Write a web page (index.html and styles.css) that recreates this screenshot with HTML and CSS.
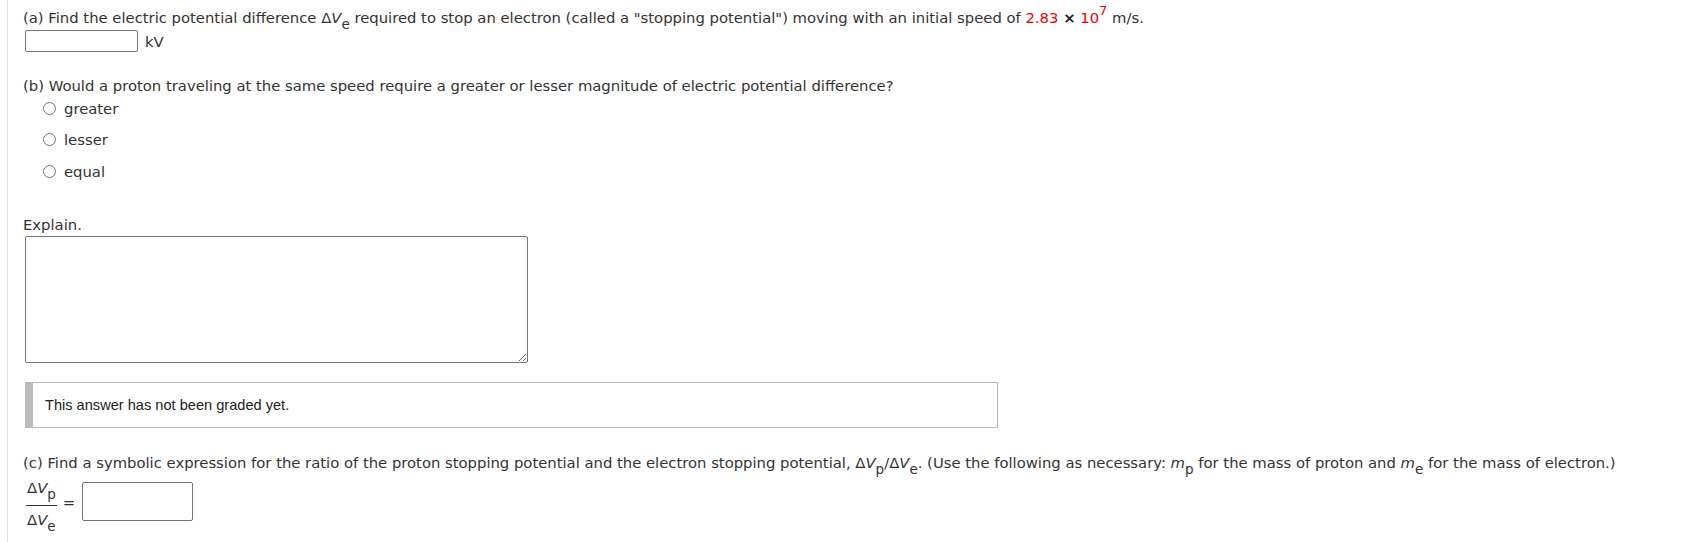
FILE: index.html
```html
<!DOCTYPE html>
<html>
<head>
<meta charset="utf-8">
<link rel="stylesheet" href="styles.css">
</head>
<body>
<div class="page">
  <p class="q q-a">(a) Find the electric potential difference <span class="var">&Delta;<i>V</i><sub>e</sub></span> required to stop an electron (called a "stopping potential") moving with an initial speed of <span class="red">2.83</span> <b class="times">&times;</b> <span class="red">10<sup>7</sup></span> m/s.</p>
  <div class="answer-row">
    <input class="ans ans-a" type="text">
    <span class="unit">kV</span>
  </div>

  <p class="q q-b">(b) Would a proton traveling at the same speed require a greater or lesser magnitude of electric potential difference?</p>
  <div class="choices">
    <label class="choice"><input type="radio" name="b"><span>greater</span></label>
    <label class="choice"><input type="radio" name="b"><span>lesser</span></label>
    <label class="choice"><input type="radio" name="b"><span>equal</span></label>
  </div>

  <p class="q explain">Explain.</p>
  <textarea class="explain-box"></textarea>

  <div class="graded">This answer has not been graded yet.</div>

  <p class="q q-c">(c) Find a symbolic expression for the ratio of the proton stopping potential and the electron stopping potential, <span class="var">&Delta;<i>V</i><sub>p</sub>/&Delta;<i>V</i><sub>e</sub></span>. (Use the following as necessary: <i>m</i><sub>p</sub> for the mass of proton and <i>m</i><sub>e</sub> for the mass of electron.)</p>
  <div class="frac-row">
    <span class="frac">
      <span class="num">&Delta;<i>V</i><sub>p</sub></span>
      <span class="den">&Delta;<i>V</i><sub>e</sub></span>
    </span>
    <span class="eq">=</span>
    <input class="ans ans-c" type="text">
  </div>
</div>
</body>
</html>
```

FILE: styles.css
```css
html, body {
  margin: 0;
  padding: 0;
  background: #fff;
}
body {
  font-family: "DejaVu Sans", Verdana, sans-serif;
  font-size: 14.8px;
  color: #333;
  height: 542px;
  overflow: hidden;
}
.page {
  margin-left: 7px;
  border-left: 1px solid #ddd;
  padding-left: 15px;
  min-height: 542px;
  box-sizing: border-box;
  padding-top: 9px;
}
p { margin: 0; }
.q { line-height: 18px; }
sub {
  font-size: 13.5px;
  vertical-align: -6px;
  line-height: 0;
}
sup {
  font-size: 13px;
  vertical-align: 8px;
  line-height: 0;
}
.red { color: #e00; }
.times { color: #222; }
.answer-row {
  display: flex;
  align-items: center;
  margin-top: 3px;
  height: 22px;
}
.ans {
  box-sizing: border-box;
  border: 1px solid #767676;
  border-radius: 2px;
  padding: 0;
  margin: 0;
  background: #fff;
  font-family: inherit;
}
.ans-a {
  width: 113px;
  height: 22px;
  margin-left: 2px;
}
.unit { margin-left: 7px; }
.q-b { margin-top: 25px; }
.choices {
  display: flex;
  flex-direction: column;
  gap: 11.5px;
  padding-left: 20px;
  margin-top: 3px;
}
.choice {
  display: flex;
  align-items: center;
  height: 20px;
}
.choice input {
  margin: 0 8px 0 0;
  width: 13px;
  height: 13px;
}
.explain { margin-top: 35px; }
.explain-box {
  display: block;
  width: 503px;
  height: 127px;
  box-sizing: border-box;
  margin: 2px 0 0 2px;
  border: 1px solid #767676;
  border-radius: 2px;
}
.graded {
  width: 973px;
  height: 46px;
  box-sizing: border-box;
  margin: 19px 0 0 2px;
  border: 1px solid #bbb;
  border-left: 8px solid #bbb;
  padding-left: 12px;
  display: flex;
  align-items: center;
  font-family: "Liberation Sans", Arial, sans-serif;
  font-size: 14.6px;
  color: #222;
}
.q-c { margin-top: 26px; }
.frac-row {
  display: flex;
  align-items: flex-start;
  margin-top: 7px;
}
.frac {
  display: inline-flex;
  flex-direction: column;
  align-items: stretch;
  padding-left: 3px;
}
.frac .num {
  border-bottom: 1px solid #333;
  padding: 0 1px 8px 1px;
  line-height: 18px;
}
.frac .den {
  padding: 5px 1px 0 1px;
  line-height: 18px;
}
.eq {
  margin: 15px 7px 0 6px;
  line-height: 18px;
}
.ans-c {
  width: 111px;
  height: 39px;
  margin-top: 3px;
}
```
